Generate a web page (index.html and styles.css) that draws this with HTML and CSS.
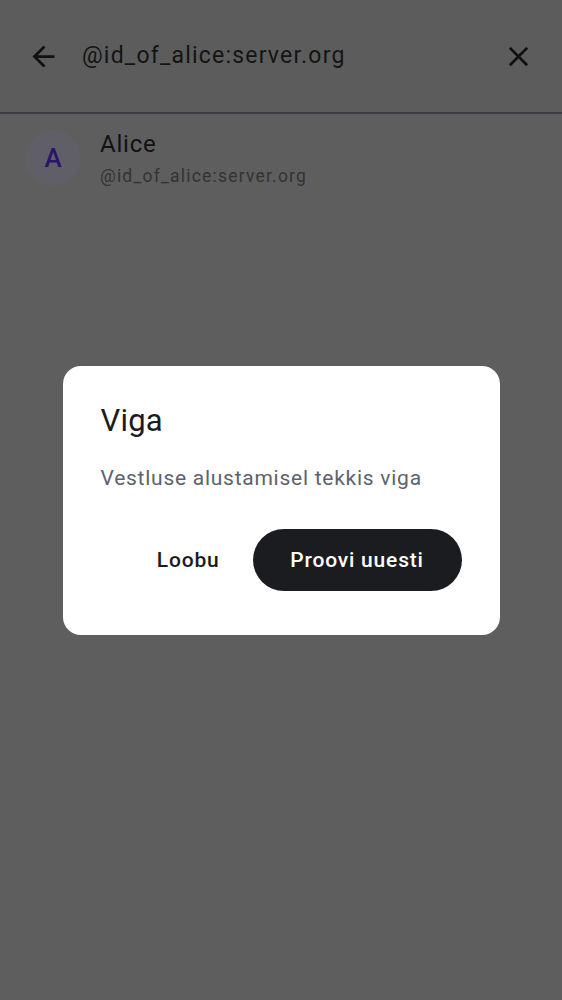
FILE: index.html
```html
<!DOCTYPE html>
<html lang="et">
<head>
<meta charset="utf-8">
<link rel="stylesheet" href="styles.css">
</head>
<body>
<div class="screen">
  <header class="topbar">
    <span class="icon back">
      <svg width="33" height="33" viewBox="0 0 24 24"><path d="M20 11H7.83l5.59-5.59L12 4l-8 8 8 8 1.41-1.41L7.83 13H20v-2z" fill="#111"/></svg>
    </span>
    <span class="query">@id_of_alice:server.org</span>
    <span class="icon close">
      <svg width="33" height="33" viewBox="0 0 24 24"><path d="M19 6.41 17.59 5 12 10.59 6.41 5 5 6.41 10.59 12 5 17.59 6.41 19 12 13.41 17.59 19 19 17.59 13.41 12z" fill="#111"/></svg>
    </span>
  </header>
  <div class="divider"></div>
  <div class="result">
    <div class="avatar">A</div>
    <div class="names">
      <div class="name">Alice</div>
      <div class="mxid">@id_of_alice:server.org</div>
    </div>
  </div>
</div>
<div class="overlay">
  <div class="dialog">
    <h2 class="title">Viga</h2>
    <p class="message">Vestluse alustamisel tekkis viga</p>
    <div class="actions">
      <button class="btn text">Loobu</button>
      <button class="btn filled">Proovi uuesti</button>
    </div>
  </div>
</div>
</body>
</html>
```
FILE: styles.css
```css
* { box-sizing: border-box; }
html, body { margin: 0; padding: 0; }
body {
  width: 562px;
  height: 1000px;
  background: #5e5e5e;
  font-family: Roboto, "Noto Sans", sans-serif;
  overflow: hidden;
}
.screen { height: 1000px; }
.topbar {
  height: 112px;
  background: #5c5c5d;
  display: flex;
  align-items: center;
  padding: 0 0 0 27px;
}
.icon { display: flex; width: 33px; height: 33px; }
.query {
  flex: 1;
  margin-left: 22px;
  font-size: 23px;
  color: #141414;
  letter-spacing: 1.2px;
  padding-bottom: 1px;
}
.close { margin-right: 27px; }
.divider { height: 2px; background: #3c3d43; }
.result {
  display: flex;
  align-items: center;
  padding: 16px 25px;
}
.avatar {
  width: 56px; height: 56px;
  border-radius: 50%;
  background: #605e66;
  color: #2c136c;
  font-size: 26px;
  font-weight: 500;
  display: flex; align-items: center; justify-content: center;
}
.names { margin-left: 19px; }
.name { font-size: 24px; color: #121212; line-height: 28px; letter-spacing: 0.8px; }
.mxid { font-size: 17.5px; color: #333335; letter-spacing: 1.2px; line-height: 20px; margin-top: 8px; }

.overlay {
  position: fixed; inset: 0;
  display: flex; align-items: center; justify-content: center;
}
.dialog {
  width: 437px;
  background: #fff;
  border-radius: 18px;
  padding: 37px 38px 44px;
}
.title {
  margin: 0;
  font-size: 31px;
  font-weight: 400;
  color: #1b1c20;
  line-height: 36px;
  letter-spacing: 0.2px;
}
.message {
  margin: 25px 0 0;
  font-size: 21px;
  color: #5d626c;
  line-height: 28px;
  letter-spacing: 0.74px;
}
.actions {
  display: flex;
  justify-content: flex-end;
  align-items: center;
  gap: 33px;
  margin-top: 37px;
}
.btn {
  font-family: Roboto, "Noto Sans", sans-serif;
  font-size: 21px;
  font-weight: 500;
  border: none;
  cursor: pointer;
  letter-spacing: 0.8px;
  padding: 0;
}
.btn.text { background: none; color: #1b1c20; }
.btn.filled {
  background: #1b1c20;
  color: #fff;
  height: 62px;
  width: 209px;
  border-radius: 31px;
}
```
